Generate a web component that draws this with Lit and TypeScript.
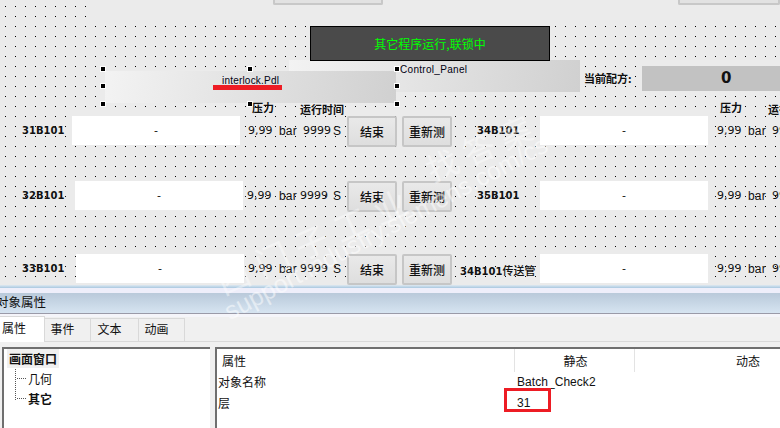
import { LitElement, html, css, svg } from "lit";
import { customElement } from "lit/decorators.js";

interface Row { label: string; suffix?: string; lx: number; wx: number; y: number; vx: number; tx: number; }

const LEFT_ROWS: Row[] = [
  { label: "31B101", lx: 22, wx: 72, y: 116, vx: 248, tx: 303 },
  { label: "32B101", lx: 22, wx: 75, y: 181, vx: 247, tx: 300 },
  { label: "33B101", lx: 22, wx: 76, y: 254, vx: 248, tx: 300 },
];
const RIGHT_ROWS: Row[] = [
  { label: "34B101", lx: 477, wx: 540, y: 116, vx: 717, tx: 772 },
  { label: "35B101", lx: 477, wx: 540, y: 181, vx: 717, tx: 772 },
  { label: "34B101", suffix: "传送管", lx: 460, wx: 540, y: 254, vx: 717, tx: 772 },
];
const HANDLES: [number, number][] = [
  [103, 69], [250, 69], [397, 69],
  [103, 86], [397, 86],
  [103, 104], [250, 104], [397, 104],
];

@customElement("app-root")
export class AppRoot extends LitElement {
  static styles = css`
    :host { display: block; width: 780px; height: 428px; overflow: hidden; position: relative;
      font-family: "DejaVu Sans", "Noto Sans CJK SC", sans-serif; color: #111; background: #fff; }
    .canvas { position: relative; height: 285px; overflow: hidden; background-color: #ebebeb; }
    .canvas > * { position: absolute; }
    .dots { left: 0; top: 0; width: 780px; height: 285px; shape-rendering: crispEdges; }
    .blank { left: 88px; top: 0; width: 692px; height: 24px; background: #ebebeb; }
    .topbtn { height: 5px; top: 0; box-sizing: border-box; background: #e2e2e2; border: 2px solid #c8c8c8; border-top: 0; border-radius: 0 0 2px 2px; }
    .topbtn.a { left: 273px; width: 110px; }
    .topbtn.b { left: 678px; width: 102px; }
    .alarm { left: 310px; top: 26px; width: 240px; height: 35px; box-sizing: border-box; background: #4a4a4a; border: 1px solid #000;
      display: flex; align-items: center; justify-content: center; color: #0f0; font: 12px "Noto Sans CJK SC", sans-serif; }
    .panelbox { left: 289px; top: 60px; width: 291px; height: 32px; background: linear-gradient(100deg, #f3f3f3, #d0d0d0); }
    .interlock { left: 105px; top: 71px; width: 291px; height: 32px; background: linear-gradient(100deg, #f3f3f3, #d0d0d0); }
    .tag { font: 10px "Liberation Sans", sans-serif; color: #001; letter-spacing: .2px; white-space: nowrap; line-height: 12px; }
    .tag.i { left: 222px; top: 75px; }
    .tag.c { left: 400px; top: 64px; letter-spacing: .3px; }
    .redline { left: 213px; top: 85px; width: 69px; height: 5px; background: #ed1c24; }
    .handle { width: 4px; height: 4px; background: #000; border: 1px solid #fff; transform: translate(-3px, -3px); }
    .recipe { left: 584px; top: 70px; font: bold 11px "Noto Sans CJK SC", sans-serif; line-height: 16px; }
    .recipebox { left: 642px; top: 66px; width: 138px; height: 25px; background: #c2c2c2; }
    .recipeval { left: 721px; top: 69px; font: bold 15px "DejaVu Sans", sans-serif; line-height: 18px; }
    .head { font: bold 11px "Noto Sans CJK SC", sans-serif; line-height: 14px; white-space: nowrap; }
    .label { font: bold 10px "DejaVu Sans", sans-serif; line-height: 14px; white-space: nowrap; }
    .label span { font: 500 11px "Noto Sans CJK SC", sans-serif; }
    .field { width: 168px; height: 29px; background: #fff; display: flex; align-items: center; justify-content: center; font: 11px "DejaVu Sans", sans-serif; }
    .val { font: 11px "DejaVu Sans", sans-serif; line-height: 14px; white-space: nowrap; }
    .unit { font: 12px "Liberation Sans", sans-serif; line-height: 14px; white-space: nowrap; letter-spacing: .2px; }
    .btn { width: 50px; height: 31px; box-sizing: border-box; background: linear-gradient(#e9e9e9, #dedede); border: 2px solid #c6c6c6; border-radius: 2px;
      display: flex; align-items: center; justify-content: center; font: 500 12px "Noto Sans CJK SC", sans-serif; color: #111; padding: 0; }

    .bottom { height: 143px; display: flex; flex-direction: column; background: #f0f0f0; }
    .edge1 { height: 3px; background: linear-gradient(#dfe9f1, #a9c8e0); }
    .edge2 { height: 5px; background: #eeeefa; }
    .title { height: 21px; box-sizing: border-box; background: linear-gradient(#b9c9da, #d6e4f1); border-bottom: 1px solid #9a9aa8;
      font: 12.5px "Noto Sans CJK SC", sans-serif; line-height: 18px; color: #111; text-indent: -4px; white-space: nowrap; overflow: hidden; }
    .sub { height: 3px; background: #f5f5fa; }
    .tabs { display: flex; height: 25px; align-items: flex-end; border-bottom: 1px solid #d9d9d9; box-sizing: border-box; }
    .tab { height: 23px; box-sizing: border-box; border: 1px solid #d9d9d9; border-bottom: 0; border-left: 0; display: flex; align-items: center; justify-content: center;
      font: 12px "Noto Sans CJK SC", sans-serif; line-height: 18px; padding: 0 10px 2px 0; color: #111; background: #f0f0f0; }
    .tab.active { height: 26px; width: 45px; background: #fff; margin-bottom: -1px; position: relative; justify-content: flex-start; padding: 0 0 4px 2px; }
    .tab.n1 { width: 46px; } .tab.n2 { width: 48px; } .tab.n3 { width: 46px; }
    .panes { flex: 1; display: flex; padding: 5px 0 0 2px; gap: 5px; min-height: 0; }
    .pane { background: #fff; border-top: 2px solid #6f6f6f; border-left: 2px solid #6f6f6f; box-sizing: border-box; }
    .tree { width: 208px; padding: 0 0 0 3px; font: 12px "Noto Sans CJK SC", sans-serif; position: relative; }
    .sel { width: 52px; height: 19px; background: #f0f0f0; font-weight: 700; display: flex; align-items: center; justify-content: center; }
    .node { display: flex; align-items: center; height: 20px; padding-left: 10px; gap: 2px; }
    .node.bold { font-weight: 700; }
    .dash { width: 9px; border-top: 1px dotted #555; }
    .vline { position: absolute; left: 11px; top: 20px; height: 31px; border-left: 1px dotted #555; }
    .props { flex: 1; font: 12px "Noto Sans CJK SC", sans-serif; position: relative; min-width: 0; }
    .phead { display: grid; grid-template-columns: 298px 120px 1fr; height: 23px; }
    .phead div { display: flex; align-items: center; justify-content: center; }
    .phead div:first-child { justify-content: flex-start; padding-left: 5px; }
    .phead div:nth-child(1), .phead div:nth-child(2) { border-right: 1px solid #e3e3e3; }
    .phead div:nth-child(2) { padding-left: 2px; }
    .phead div:last-child { padding-left: 101px; justify-content: flex-start; }
    .prow { display: grid; grid-template-columns: 299px 1fr; height: 21px; box-sizing: border-box; padding: 0 0 2px 1px; align-items: center; }
    .latin { font: 12px "Liberation Sans", sans-serif; letter-spacing: .05px; }
    .redbox { position: absolute; left: 287px; top: 39px; width: 47px; height: 24px; box-sizing: border-box; border: 3px solid #ed1c24; }
    .wm { position: absolute; pointer-events: none; white-space: nowrap; }
    .wm.cn { font: 34px/40px "Noto Sans CJK SC", sans-serif; letter-spacing: 9px; color: rgba(255,255,255,.42); transform-origin: 0 50%; transform: rotate(-24deg); }
    .wm.w1 { left: 217px; top: 263px; }
    .wm.w2 { left: 427px; top: 150px; font-size: 32px; letter-spacing: 8px; }
    .wm.w3 { left: 232px; top: 298px; font: 25px/26px "Liberation Sans", sans-serif; color: rgba(255,255,255,.5); transform-origin: 0 100%; transform: rotate(-28deg); }
  `;

  private row(r: Row, side: "l" | "r") {
    const t = r.y;
    const text = t + 8;
    return html`
      <div class="label" style="left:${r.lx}px;top:${text}px">${r.label}${r.suffix ? html`<span>${r.suffix}</span>` : ""}</div>
      <div class="field" style="left:${r.wx}px;top:${t}px">-</div>
      <div class="val" style="left:${r.vx}px;top:${text}px">9,99</div>
      <div class="unit" style="left:${side === "l" ? 279 : 748}px;top:${text}px">bar</div>
      <div class="val" style="left:${r.tx}px;top:${text}px">9999</div>
      ${side === "l"
        ? html`<div class="unit" style="left:333px;top:${text}px">S</div>
            <button class="btn" style="left:347px;top:${t}px">结束</button>
            <button class="btn" style="left:402px;top:${t}px">重新测</button>`
        : ""}
    `;
  }

  render() {
    return html`
      <div class="canvas">
        <svg class="dots" viewBox="0 0 780 285">
          <defs>
            <pattern id="grid" x="5" y="6" width="10" height="10" patternUnits="userSpaceOnUse">
              ${svg`<rect width="1" height="1" fill="#000"></rect>`}
            </pattern>
          </defs>
          <rect width="780" height="285" fill="url(#grid)"></rect>
        </svg>
        <div class="blank"></div>
        <div class="topbtn a"></div>
        <div class="topbtn b"></div>
        <div class="panelbox"></div>
        <div class="alarm">其它程序运行,联锁中</div>
        <div class="tag c">Control_Panel</div>
        <div class="interlock"></div>
        <div class="tag i">interlock.Pdl</div>
        <div class="redline"></div>
        ${HANDLES.map(([x, y]) => html`<div class="handle" style="left:${x}px;top:${y}px"></div>`)}
        <div class="recipe">当前配方:</div>
        <div class="recipebox"></div>
        <div class="recipeval">0</div>
        <div class="head" style="left:252px;top:100px">压力</div>
        <div class="head" style="left:300px;top:102px">运行时间</div>
        <div class="head" style="left:720px;top:100px">压力</div>
        <div class="head" style="left:768px;top:102px">运行时间</div>
        ${LEFT_ROWS.map((r) => this.row(r, "l"))}
        ${RIGHT_ROWS.map((r) => this.row(r, "r"))}
      </div>
      <div class="bottom">
        <div class="edge1"></div>
        <div class="edge2"></div>
        <div class="title">对象属性</div>
        <div class="sub"></div>
        <div class="tabs">
          <div class="tab active">属性</div>
          <div class="tab n1">事件</div>
          <div class="tab n2">文本</div>
          <div class="tab n3">动画</div>
        </div>
        <div class="panes">
          <div class="pane tree">
            <div class="sel">画面窗口</div>
            <div class="vline"></div>
            <div class="node"><span class="dash"></span>几何</div>
            <div class="node bold"><span class="dash"></span>其它</div>
          </div>
          <div class="pane props">
            <div class="phead"><div>属性</div><div>静态</div><div>动态</div></div>
            <div class="prow"><span>对象名称</span><span class="latin">Batch_Check2</span></div>
            <div class="prow"><span>层</span><span class="latin">31</span></div>
            <div class="redbox"></div>
          </div>
        </div>
      </div>
      <div class="wm cn w1">西门子工业</div>
      <div class="wm cn w2">找答案</div>
      <div class="wm w3">support.industry.siemens.com/cs</div>
    `;
  }
}
